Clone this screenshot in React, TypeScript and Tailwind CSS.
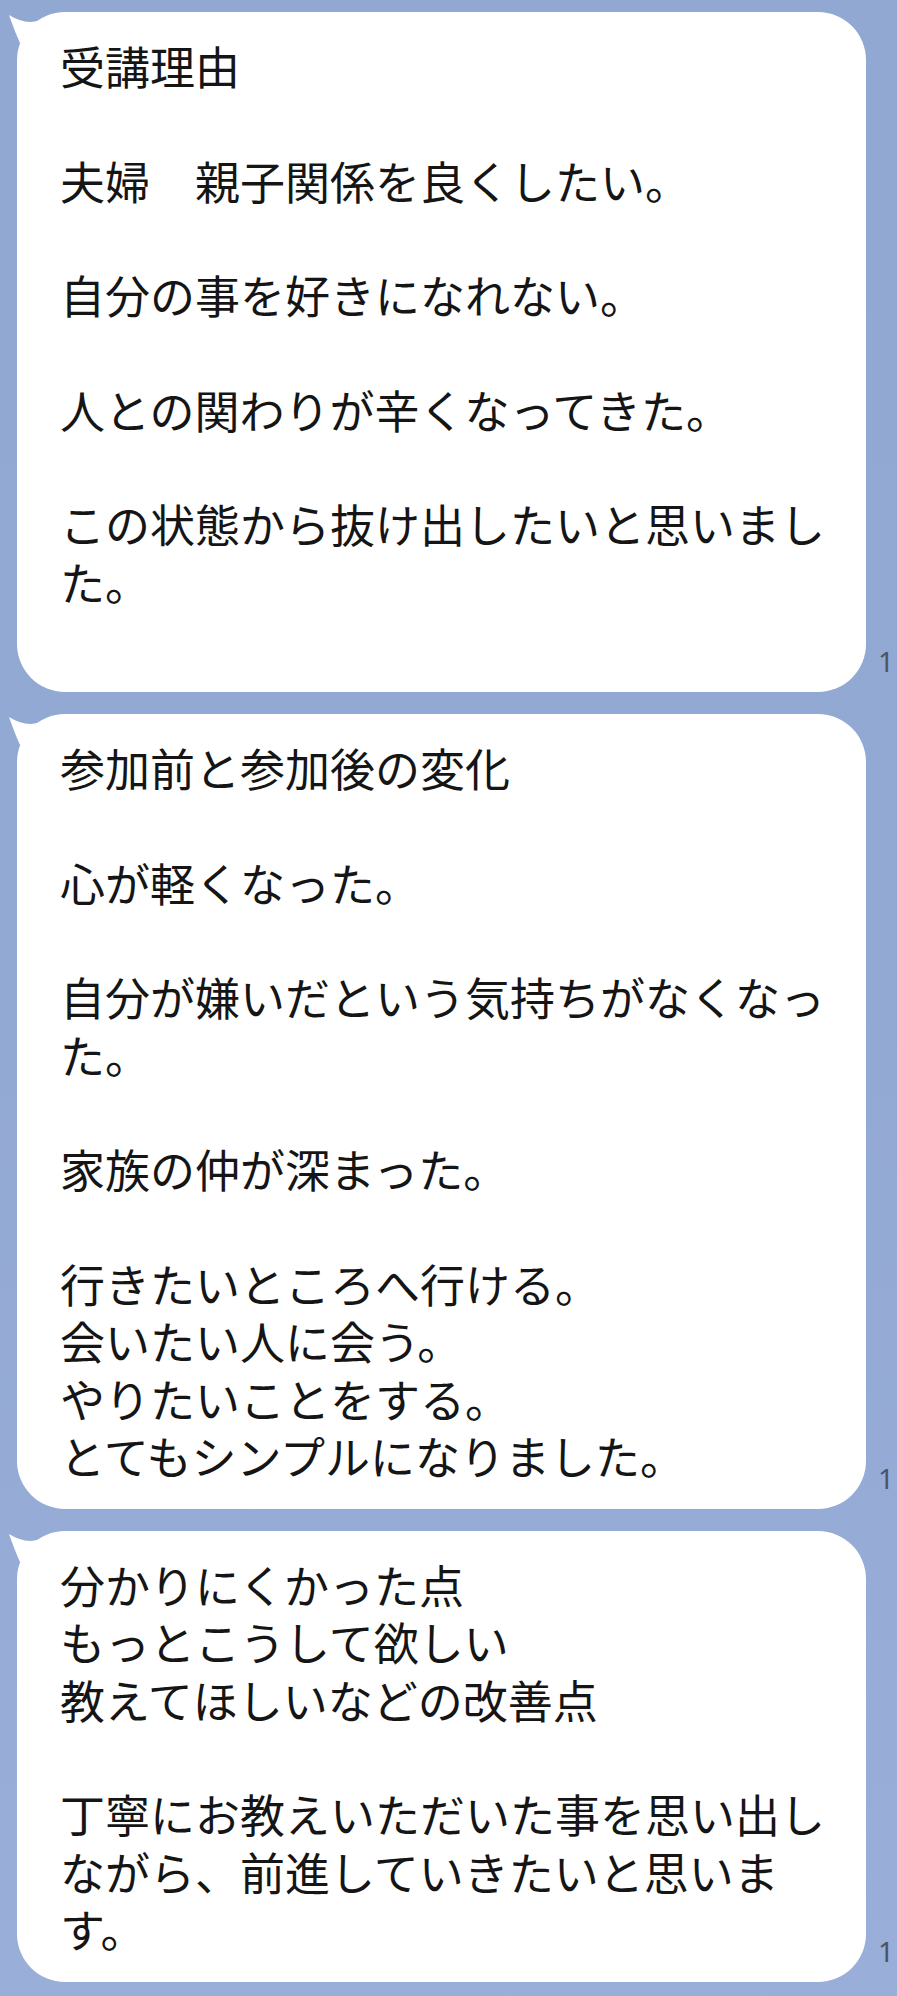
const messages: string[] = [
  "受講理由\n\n夫婦　親子関係を良くしたい。\n\n自分の事を好きになれない。\n\n人との関わりが辛くなってきた。\n\nこの状態から抜け出したいと思いました。\n\u200b",
  "参加前と参加後の変化\n\n心が軽くなった。\n\n自分が嫌いだという気持ちがなくなった。\n\n家族の仲が深まった。\n\n行きたいところへ行ける。\n会いたい人に会う。\nやりたいことをする。\nとてもシンプルになりました。",
  "分かりにくかった点\nもっとこうして欲しい\n教えてほしいなどの改善点\n\n丁寧にお教えいただいた事を思い出しながら、前進していきたいと思います。",
];

const Tail = () => (
  <svg
    className="absolute left-[-10px] top-0 overflow-visible"
    width="50"
    height="40"
    viewBox="-10 0 50 40"
  >
    <path d="M -8 3 Q 8 13 22 8.5 L 26 26 L 3 31 Q -2 20 -8 3 Z" fill="#ffffff" />
  </svg>
);

const Bubble = ({ text }: { text: string }) => (
  <div className="flex items-end">
    <div className="relative w-[849px] shrink-0 rounded-[48px] bg-white pl-[43px] pr-[36px] pt-[25px] pb-[25px]">
      <Tail />
      <p className="whitespace-pre-wrap text-[45px] leading-[57.3px] text-[#151515] [font-family:'Noto_Sans_CJK_JP','Noto_Sans_JP',sans-serif]">
        {text}
      </p>
    </div>
    <span className="ml-[12px] mb-[17px] shrink-0 text-[28px] leading-none text-[#4b5364] [font-family:'Noto_Sans',sans-serif]">
      1
    </span>
  </div>
);

export default function App() {
  return (
    <div className="w-[897px] h-[1996px] overflow-hidden bg-gradient-to-b from-[#91a8d3] via-[#92a9d4] to-[#99aed8] pl-[17px] pt-[12px]">
      <div className="flex flex-col gap-[22px]">
        {messages.map((m, i) => (
          <Bubble key={i} text={m} />
        ))}
      </div>
    </div>
  );
}
